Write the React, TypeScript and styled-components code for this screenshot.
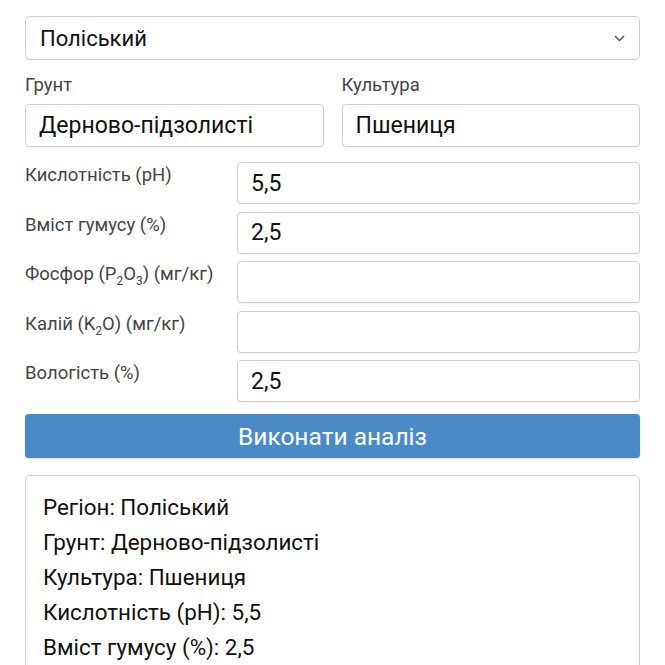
import styled, { createGlobalStyle } from 'styled-components';

const GlobalStyle = createGlobalStyle`
  body {
    margin: 0;
    background: #ffffff;
    font-family: Roboto, "Noto Sans", "Liberation Sans", sans-serif;
    color: #111;
  }
`;

const Page = styled.div`
  padding: 16px 25px 0 25px;
  display: flex;
  flex-direction: column;
`;

const SelectBox = styled.div`
  height: 44px;
  box-sizing: border-box;
  border: 1px solid #cfcfcf;
  border-radius: 5px;
  display: flex;
  align-items: center;
  justify-content: space-between;
  padding: 0 14px 0 14px;
  font-size: 22px;
  color: #111;
  box-shadow: 0 1px 1px rgba(0, 0, 0, 0.06);
`;

const TwoCols = styled.div`
  display: grid;
  grid-template-columns: 1fr 1fr;
  column-gap: 18px;
  margin-top: 15px;
`;

const Field = styled.div`
  display: flex;
  flex-direction: column;
`;

const TopLabel = styled.label`
  font-size: 18.5px;
  line-height: 20px;
  color: #444;
  margin-bottom: 9px;
`;

const Input = styled.div<{ $h?: number }>`
  height: ${(p) => p.$h ?? 43}px;
  box-sizing: border-box;
  border: 1px solid #cfcfcf;
  border-radius: 4px;
  display: flex;
  align-items: center;
  padding: 0 13px;
  font-size: 23px;
  color: #111;
  box-shadow: 0 1px 1px rgba(0, 0, 0, 0.05);
`;

const Rows = styled.div`
  display: flex;
  flex-direction: column;
  gap: 7.5px;
  margin-top: 15px;
`;

const Row = styled.div`
  display: grid;
  grid-template-columns: 212px 1fr;
`;

const RowLabel = styled.label`
  font-size: 18.5px;
  line-height: 20px;
  color: #444;
  padding-top: 3px;

  sub {
    font-size: 12px;
    line-height: 0;
    vertical-align: -5px;
  }
`;

const Button = styled.button`
  margin-top: 12px;
  height: 44px;
  border: none;
  border-radius: 4px;
  background: #4a8bc7;
  color: #fff;
  font-family: inherit;
  font-size: 24.5px;
  box-shadow: 0 1px 2px rgba(0, 0, 0, 0.15);
`;

const Result = styled.div`
  margin-top: 17px;
  border: 1px solid #d2d2d2;
  border-radius: 5px;
  padding: 14px 17px;
  height: 260px;
  box-sizing: border-box;
`;

const ResultLine = styled.div`
  font-size: 22.4px;
  line-height: 35px;
  color: #111;
`;

const Chevron = () => (
  <svg width="11" height="7" viewBox="0 0 11 7" fill="none">
    <path d="M1 1l4.5 4.5L10 1" stroke="#555" strokeWidth="1.5" />
  </svg>
);

const params = [
  { label: <>Кислотність (pH)</>, value: '5,5' },
  { label: <>Вміст гумусу (%)</>, value: '2,5' },
  {
    label: (
      <>
        Фосфор (P<sub>2</sub>O<sub>3</sub>) (мг/кг)
      </>
    ),
    value: '',
  },
  {
    label: (
      <>
        Калій (K<sub>2</sub>O) (мг/кг)
      </>
    ),
    value: '',
  },
  { label: <>Вологість (%)</>, value: '2,5' },
];

const results = [
  'Регіон: Поліський',
  'Грунт: Дерново-підзолисті',
  'Культура: Пшениця',
  'Кислотність (pH): 5,5',
  'Вміст гумусу (%): 2,5',
];

export default function App() {
  return (
    <>
      <GlobalStyle />
      <Page>
        <SelectBox>
          <span>Поліський</span>
          <Chevron />
        </SelectBox>
        <TwoCols>
          <Field>
            <TopLabel>Грунт</TopLabel>
            <Input>Дерново-підзолисті</Input>
          </Field>
          <Field>
            <TopLabel>Культура</TopLabel>
            <Input>Пшениця</Input>
          </Field>
        </TwoCols>
        <Rows>
          {params.map((p, i) => (
            <Row key={i}>
              <RowLabel>{p.label}</RowLabel>
              <Input $h={42}>{p.value}</Input>
            </Row>
          ))}
        </Rows>
        <Button>Виконати аналіз</Button>
        <Result>
          {results.map((r) => (
            <ResultLine key={r}>{r}</ResultLine>
          ))}
        </Result>
      </Page>
    </>
  );
}
